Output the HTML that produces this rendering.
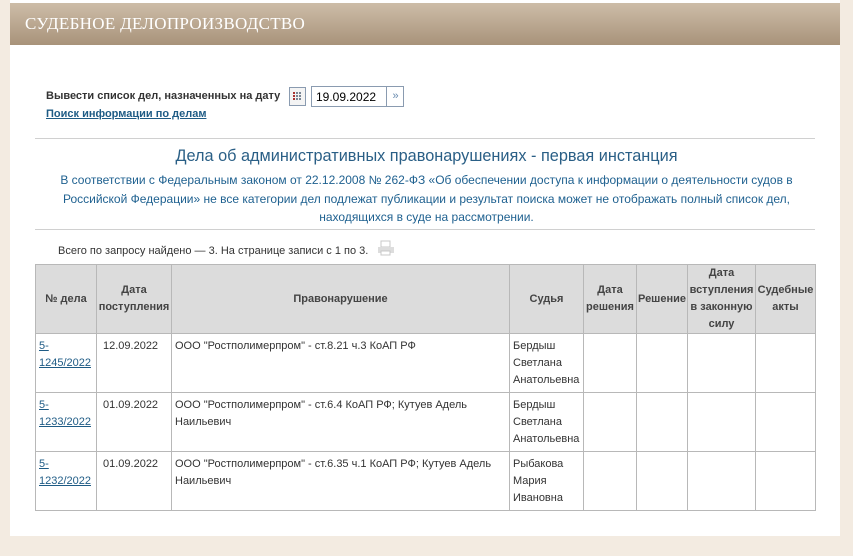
<!DOCTYPE html>
<html><head><meta charset="utf-8"><style>
*{margin:0;padding:0;box-sizing:border-box}
body{width:853px;height:556px;background:#f3ebe1;font-family:"Liberation Sans",Arial,sans-serif;position:relative;overflow:hidden;color:#333}
.panel{position:absolute;left:10px;top:0;width:830px;height:536px;background:#fff}
.hdr{position:absolute;left:10px;top:3px;width:830px;height:42px;background:linear-gradient(#cdbda8,#a8937a);}
.hdr span{position:absolute;left:15px;top:11px;font-family:"Liberation Serif",serif;font-size:17px;color:#fff;letter-spacing:.3px}
.abs{position:absolute}
.lbl{left:46px;top:90px;font-size:11px;font-weight:bold;color:#333}
.link{left:46px;top:108px;font-size:11px;font-weight:bold;color:#1e5b85;text-decoration:underline}
.cal{left:289px;top:87px;width:17px;height:19px;border:1px solid #8a9bb0;background:#f4f4f4}
.inp{left:311px;top:86px;width:93px;height:21px;border:1px solid #8a9bb0;font-size:12px;padding:3px 0 0 4px;color:#000}
.btn{left:386px;top:86px;width:18px;height:21px;border-left:1px solid #8a9bb0;font-size:11px;color:#6a8cb0;text-align:center;line-height:20px}
.hr{left:35px;width:780px;height:1px;background:#d0d0d0}
.t1{left:0;width:853px;top:147px;text-align:center;font-size:16.3px;color:#2a5f86}
.t2{left:50px;width:753px;top:171px;text-align:center;font-size:12px;line-height:18.5px;color:#1f6190}
.cnt{left:58px;top:245px;font-size:11px;color:#333}
table{position:absolute;left:35px;top:264px;border-collapse:collapse;font-size:11px;color:#333}
td,th{border:1px solid #b8b8b8;vertical-align:top;line-height:17px}
th{background:#dcdcdc;font-weight:bold;color:#444;vertical-align:middle;text-align:center;height:68px;padding:0}
td{padding:4px 2px 0 3px;height:59px}
td a{color:#1e5b85;text-decoration:underline}
</style></head><body>
<div class="panel"></div>
<div class="hdr"><span>СУДЕБНОЕ ДЕЛОПРОИЗВОДСТВО</span></div>
<div class="abs lbl">Вывести список дел, назначенных на дату</div>
<div class="abs cal"><svg width="15" height="17"><g fill="#7a8594"><rect x="3" y="4" width="2" height="2" fill="#a33"/><rect x="6" y="4" width="2" height="2"/><rect x="9" y="4" width="2" height="2"/><rect x="3" y="7" width="2" height="2" fill="#a33"/><rect x="6" y="7" width="2" height="2"/><rect x="9" y="7" width="2" height="2"/><rect x="3" y="10" width="2" height="2" fill="#a33"/><rect x="6" y="10" width="2" height="2"/><rect x="9" y="10" width="2" height="2"/></g></svg></div>
<div class="abs inp">19.09.2022</div>
<div class="abs btn">»</div>
<div class="abs link">Поиск информации по делам</div>
<div class="abs hr" style="top:138px"></div>
<div class="abs t1">Дела об административных правонарушениях - первая инстанция</div>
<div class="abs t2">В соответствии с Федеральным законом от 22.12.2008 № 262-ФЗ «Об обеспечении доступа к информации о деятельности судов в Российской Федерации» не все категории дел подлежат публикации и результат поиска может не отображать полный список дел, находящихся в суде на рассмотрении.</div>
<div class="abs hr" style="top:229px"></div>
<div class="abs cnt">Всего по запросу найдено — 3. На странице записи с 1 по 3.</div>
<svg class="abs" style="left:377px;top:240px" width="18" height="16"><rect x="4" y="1" width="9" height="6" fill="none" stroke="#c8c8c8"/><rect x="1" y="7" width="16" height="6" fill="#ddd"/><rect x="4" y="11" width="9" height="4" fill="#fff" stroke="#c8c8c8"/></svg>
<table>
<tr><th style="width:61px">№ дела</th><th style="width:75px">Дата<br>поступления</th><th style="width:338px">Правонарушение</th><th style="width:74px">Судья</th><th style="width:53px">Дата<br>решения</th><th style="width:51px">Решение</th><th style="width:68px">Дата<br>вступления<br>в законную<br>силу</th><th style="width:60px">Судебные<br>акты</th></tr>
<tr><td><a>5-<br>1245/2022</a></td><td style="padding-left:6px">12.09.2022</td><td>ООО "Ростполимерпром" - ст.8.21 ч.3 КоАП РФ</td><td>Бердыш<br>Светлана<br>Анатольевна</td><td></td><td></td><td></td><td></td></tr>
<tr><td><a>5-<br>1233/2022</a></td><td style="padding-left:6px">01.09.2022</td><td>ООО "Ростполимерпром" - ст.6.4 КоАП РФ; Кутуев Адель<br>Наильевич</td><td>Бердыш<br>Светлана<br>Анатольевна</td><td></td><td></td><td></td><td></td></tr>
<tr><td><a>5-<br>1232/2022</a></td><td style="padding-left:6px">01.09.2022</td><td>ООО "Ростполимерпром" - ст.6.35 ч.1 КоАП РФ; Кутуев Адель<br>Наильевич</td><td>Рыбакова<br>Мария<br>Ивановна</td><td></td><td></td><td></td><td></td></tr>
</table>
</body></html>
